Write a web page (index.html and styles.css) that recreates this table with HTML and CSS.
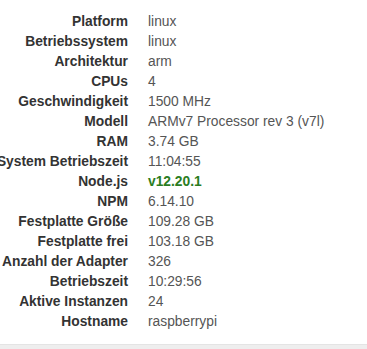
FILE: index.html
```html
<!DOCTYPE html>
<html>
<head>
<meta charset="utf-8">
<link rel="stylesheet" href="styles.css">
</head>
<body>
<div class="page">
  <div class="info">
    <div class="row"><div class="k">Platform</div><div class="v">linux</div></div>
    <div class="row"><div class="k">Betriebssystem</div><div class="v">linux</div></div>
    <div class="row"><div class="k">Architektur</div><div class="v">arm</div></div>
    <div class="row"><div class="k">CPUs</div><div class="v">4</div></div>
    <div class="row"><div class="k">Geschwindigkeit</div><div class="v">1500 MHz</div></div>
    <div class="row"><div class="k">Modell</div><div class="v">ARMv7 Processor rev 3 (v7l)</div></div>
    <div class="row"><div class="k">RAM</div><div class="v">3.74 GB</div></div>
    <div class="row"><div class="k">System Betriebszeit</div><div class="v">11:04:55</div></div>
    <div class="row"><div class="k">Node.js</div><div class="v ok">v12.20.1</div></div>
    <div class="row"><div class="k">NPM</div><div class="v">6.14.10</div></div>
    <div class="row"><div class="k">Festplatte Größe</div><div class="v">109.28 GB</div></div>
    <div class="row"><div class="k">Festplatte frei</div><div class="v">103.18 GB</div></div>
    <div class="row"><div class="k">Anzahl der Adapter</div><div class="v">326</div></div>
    <div class="row"><div class="k">Betriebszeit</div><div class="v">10:29:56</div></div>
    <div class="row"><div class="k">Aktive Instanzen</div><div class="v">24</div></div>
    <div class="row"><div class="k">Hostname</div><div class="v">raspberrypi</div></div>
  </div>
  <div class="footer"></div>
</div>
</body>
</html>
```
FILE: styles.css
```css
html, body {
  margin: 0;
  padding: 0;
  background: #fff;
}
body {
  font-family: "Liberation Sans", Arial, sans-serif;
  font-size: 13.8px;
  color: #333;
  width: 367px;
  height: 349px;
  overflow: hidden;
}
.page {
  display: flex;
  flex-direction: column;
  height: 349px;
}
.info {
  padding-top: 11px;
  flex: 1;
}
.row {
  display: flex;
  height: 20px;
  align-items: center;
  white-space: nowrap;
}
.k {
  width: 128px;
  flex: none;
  display: flex;
  justify-content: flex-end;
  font-weight: bold;
  color: #333;
}
.v {
  padding-left: 20px;
  color: #555;
}
.v.ok {
  color: #2a7d22;
  font-weight: bold;
}
.footer {
  height: 4px;
  background: #eeeeee;
  border-top: 1px solid #e4e4e4;
}
```
